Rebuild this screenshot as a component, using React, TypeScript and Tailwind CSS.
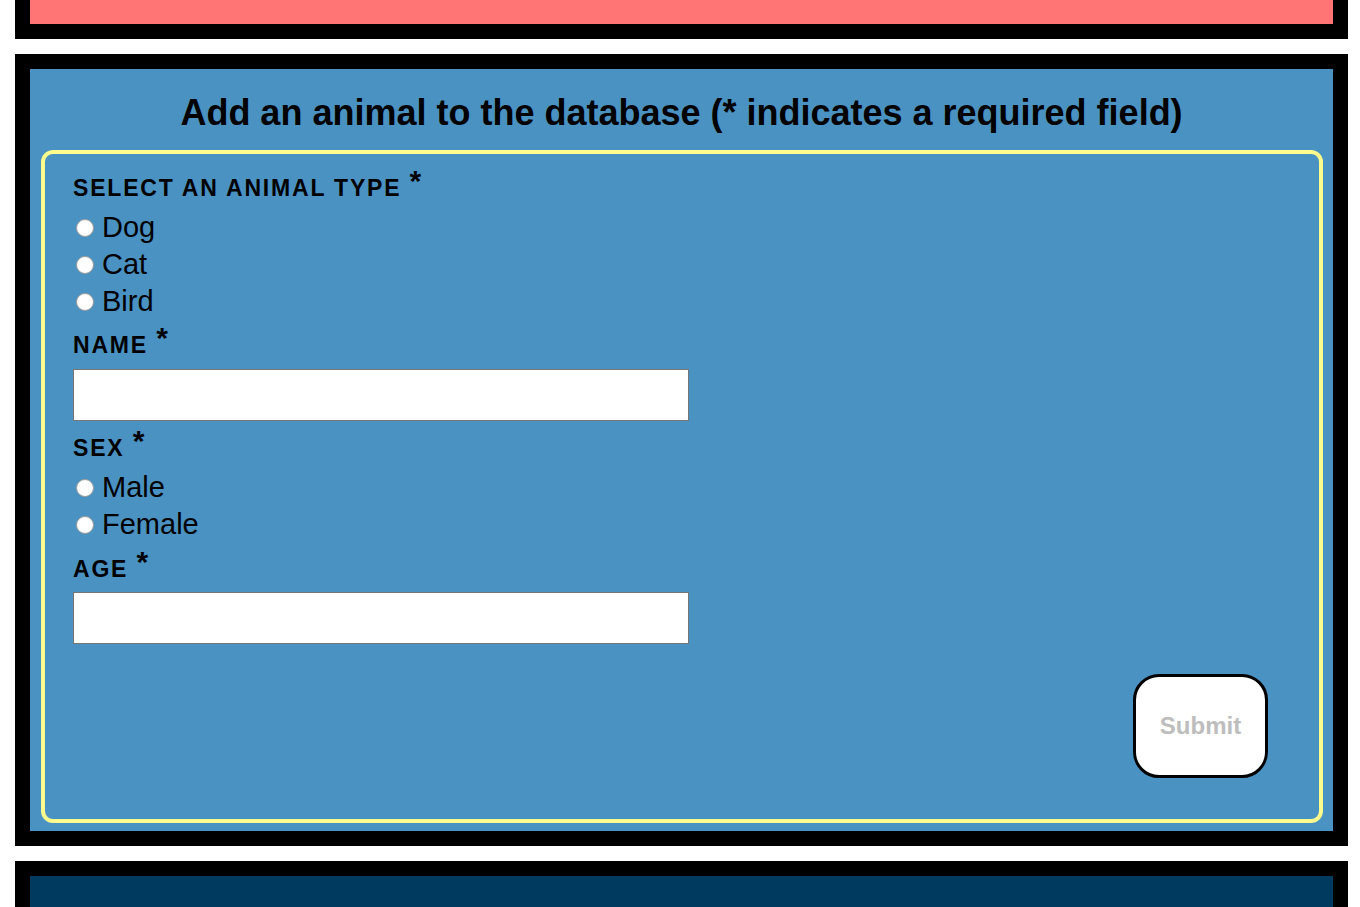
import React from "react";

function Label({ text }: { text: string }) {
  return (
    <div className="text-[23px] leading-[26px] font-bold uppercase tracking-[1.8px] text-black">
      {text}{" "}
      <span className="text-[30px] font-bold leading-[0] tracking-normal align-[5px]">*</span>
    </div>
  );
}

function Radio({ name, label }: { name: string; label: string }) {
  return (
    <label className="flex items-center h-[37px] text-[29px] leading-[37px] text-black">
      <input
        type="radio"
        name={name}
        className="appearance-none w-[18px] h-[18px] rounded-full bg-white border border-[#9a9a9a] ml-[3px] mr-[8px] shrink-0"
      />
      <span>{label}</span>
    </label>
  );
}

export default function App() {
  return (
    <div className="w-[1360px] h-[907px] overflow-hidden bg-white" style={{ fontFamily: '"Liberation Sans", Arial, sans-serif' }}>
      <div className="ml-[15px] w-[1333px] border-x-[15px] border-b-[15px] border-black">
        <div className="h-[24px] bg-[#ff7575]" />
      </div>

      <div className="ml-[15px] mt-[15px] w-[1333px] border-[15px] border-black">
        <div className="bg-[#4a92c2] pt-[23px] pb-[8px]">
          <h1 className="text-center text-[36px] leading-[42px] font-bold text-black">
            Add an animal to the database (* indicates a required field)
          </h1>
          <form className="mt-[16px] ml-[11px] mr-[10px] border-[4px] border-[#fffb8c] rounded-[12px] pl-[28px] pt-[21px] pb-[41px]">
            <Label text="Select an animal type" />
            <div className="mt-[8px] flex flex-col">
              <Radio name="type" label="Dog" />
              <Radio name="type" label="Cat" />
              <Radio name="type" label="Bird" />
            </div>
            <div className="mt-[12px]">
              <Label text="Name" />
            </div>
            <input
              type="text"
              className="mt-[11px] block w-[616px] h-[52px] bg-white border border-[#767676] outline-none"
            />
            <div className="mt-[14px]">
              <Label text="Sex" />
            </div>
            <div className="mt-[8px] flex flex-col">
              <Radio name="sex" label="Male" />
              <Radio name="sex" label="Female" />
            </div>
            <div className="mt-[13px]">
              <Label text="Age" />
            </div>
            <input
              type="text"
              className="mt-[10px] block w-[616px] h-[52px] bg-white border border-[#767676] outline-none"
            />
            <div className="mt-[30px] flex justify-end pr-[51px]">
              <button
                type="button"
                disabled
                className="w-[135px] h-[104px] bg-white border-[3px] border-black rounded-[26px] text-[24px] font-bold text-[#bdbdbd]"
              >
                Submit
              </button>
            </div>
          </form>
        </div>
      </div>

      <div className="ml-[15px] mt-[15px] w-[1333px] border-[15px] border-black">
        <div className="h-[200px] bg-[#003a5e]" />
      </div>
    </div>
  );
}
